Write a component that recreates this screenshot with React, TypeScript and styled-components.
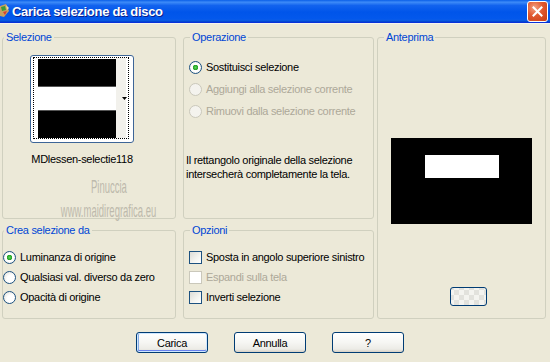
import React from 'react';
import styled, {createGlobalStyle} from "styled-components";

const GlobalStyle = createGlobalStyle`
  html, body {
    margin: 0;
    padding: 0;
    background: #ECE9D8;
  }
  body {
    font-family: "Liberation Sans", Arial, sans-serif;
    font-size: 11px;
    letter-spacing: -0.3px;
    color: #000;
  }
`;

type GroupProps = {
    title: string;
    area: string;
    legendOffset: number;
    middle?: boolean;
    children: React.ReactNode;
}

const Group = (props: GroupProps) => {
    return (
        <GroupBox $area={props.area} $middle={props.middle}>
            <GroupLegend $offset={props.legendOffset}>{props.title}</GroupLegend>
            {props.children}
        </GroupBox>
    );
};

type OptionProps = {
    label: string;
    checked?: boolean;
    disabled?: boolean;
}

const RadioOption = (props: OptionProps) => (
    <OptionLabel $disabled={props.disabled}>
        <RadioMark $disabled={props.disabled} $checked={props.checked}/>
        {props.label}
    </OptionLabel>
);

const CheckOption = (props: OptionProps) => (
    <OptionLabel $disabled={props.disabled}>
        <CheckMark $disabled={props.disabled}/>
        {props.label}
    </OptionLabel>
);

const App = () => {
    return (
        <>
            <GlobalStyle/>
            <Window>
                <TitleBar>
                    <TitleIcon width="11" height="18" viewBox="0 0 11 18">
                        <path d="M0 4 L6 2 L9 9 L4 15 L0 14 Z" fill="#c8a060"/>
                        <path d="M1 5 L5 4 L6 8 L2 9 Z" fill="#3a9a3a"/>
                        <path d="M3 10 L7 9 L5 13 Z" fill="#d84030"/>
                        <path d="M6 3 L9 6 L7 8 Z" fill="#f0e0a0"/>
                    </TitleIcon>
                    <TitleText>Carica selezione da disco</TitleText>
                    <CloseButton>
                        <svg width="11" height="11" viewBox="0 0 11 11">
                            <path d="M1.5 1.5 L9.5 9.5 M9.5 1.5 L1.5 9.5" stroke="#fff" strokeWidth="2" strokeLinecap="square"/>
                        </svg>
                    </CloseButton>
                </TitleBar>

                <Body>
                    <Group title="Selezione" area="sel" legendOffset={1}>
                        <SelectionColumn>
                            <Thumbnail>
                                <FocusFrame>
                                    <svg width="94" height="80" viewBox="0 0 94 80">
                                        <rect x="0" y="0" width="94" height="80" fill="#fff"/>
                                        <rect x="4" y="1" width="78" height="28" fill="#000"/>
                                        <rect x="4" y="28" width="78" height="1" fill="#555"/>
                                        <rect x="4" y="52" width="78" height="1" fill="#555"/>
                                        <rect x="4" y="53" width="78" height="27" fill="#000"/>
                                        <rect x="82" y="0" width="10" height="80" fill="#f2f1ec"/>
                                        <path d="M88 39 L93 39 L90.5 42 Z" fill="#000"/>
                                    </svg>
                                </FocusFrame>
                            </Thumbnail>
                            <FileName>MDlessen-selectie118</FileName>
                        </SelectionColumn>
                        <Watermark>
                            <WatermarkLine $size={19}>Pinuccia</WatermarkLine>
                            <WatermarkLine $size={19}>www.maidiregrafica.eu</WatermarkLine>
                        </Watermark>
                    </Group>

                    <Group title="Operazione" area="op" legendOffset={6} middle>
                        <OptionList $row={22} $top={12}>
                            <RadioOption label="Sostituisci selezione" checked/>
                            <RadioOption label="Aggiungi alla selezione corrente" disabled/>
                            <RadioOption label="Rimuovi dalla selezione corrente" disabled/>
                        </OptionList>
                        <Description>
                            Il rettangolo originale della selezione<br/>
                            intersecherà completamente la tela.
                        </Description>
                    </Group>

                    <Group title="Anteprima" area="prev" legendOffset={6}>
                        <PreviewColumn>
                            <svg width="141" height="86" viewBox="0 0 141 86">
                                <rect width="141" height="86" fill="#000"/>
                                <rect x="34" y="17" width="74" height="23" fill="#fff"/>
                            </svg>
                            <PatternButton/>
                        </PreviewColumn>
                    </Group>

                    <Group title="Crea selezione da" area="crea" legendOffset={1}>
                        <OptionList $row={20} $top={10} $left={0}>
                            <RadioOption label="Luminanza di origine" checked/>
                            <RadioOption label="Qualsiasi val. diverso da zero"/>
                            <RadioOption label="Opacità di origine"/>
                        </OptionList>
                    </Group>

                    <Group title="Opzioni" area="opz" legendOffset={6} middle>
                        <OptionList $row={20} $top={10}>
                            <CheckOption label="Sposta in angolo superiore sinistro"/>
                            <CheckOption label="Espandi sulla tela" disabled/>
                            <CheckOption label="Inverti selezione"/>
                        </OptionList>
                    </Group>
                </Body>

                <ButtonRow>
                    <DialogButton $default>Carica</DialogButton>
                    <DialogButton>Annulla</DialogButton>
                    <DialogButton>?</DialogButton>
                </ButtonRow>
            </Window>
        </>
    );
};

const Window = styled.div`
  width: 550px;
  height: 362px;
  background: #ECE9D8;
  overflow: hidden;
`;

const TitleBar = styled.div`
  height: 22px;
  display: flex;
  align-items: center;
  background: linear-gradient(180deg, #0A5FE8 0%, #3D8BF8 10%, #1263EE 25%, #0055EA 55%, #0358EC 85%, #0A5CE6 92%, #0040C8 100%);
  border-bottom: 1px solid #0831D9;
  box-shadow: 0 1px 0 #F5F4EE;
`;

const TitleIcon = styled.svg`
  flex: none;
  margin-right: 1px;
`;

const TitleText = styled.div`
  flex: 1;
  color: #fff;
  font-family: "Liberation Sans", Arial, sans-serif;
  font-weight: bold;
  font-size: 13px;
  letter-spacing: -0.3px;
  text-shadow: 1px 1px 0 #0A1E8C;
  padding-top: 1px;
`;

const CloseButton = styled.div`
  width: 19px;
  height: 19px;
  margin-right: 2px;
  margin-top: 1px;
  border: 1px solid #fff;
  border-radius: 3px;
  background: radial-gradient(circle at 35% 30%, #F4A182 0%, #E0582F 45%, #C83D12 100%);
  display: flex;
  align-items: center;
  justify-content: center;
`;

const Body = styled.div`
  display: grid;
  grid-template-columns: 174px 201px 169px;
  grid-template-rows: 189px 96px;
  grid-template-areas:
    "sel op prev"
    "crea opz prev";
  row-gap: 4px;
  padding: 7px 0 0 2px;
  box-sizing: border-box;
`;

const GroupBox = styled.fieldset<{ $area: string; $middle?: boolean }>`
  grid-area: ${props => props.$area};
  margin: ${props => props.$middle ? "0 3px 0 7px" : "0"};
  padding: 0;
  min-width: 0;
  border: 1px solid #D0D0BF;
  border-radius: 3px;
  display: flex;
  flex-direction: column;
`;

const GroupLegend = styled.legend<{ $offset: number }>`
  margin-left: ${props => props.$offset}px;
  padding: 0 2px;
  color: #0046D5;
  font-size: 11px;
  line-height: 14px;
`;

const SelectionColumn = styled.div`
  width: 102px;
  margin: 11px 0 0 28px;
  display: flex;
  flex-direction: column;
  align-items: center;
`;

const Thumbnail = styled.div`
  width: 100px;
  height: 84px;
  border: 1px solid #3D6597;
  border-radius: 3px;
  padding: 1px;
  box-sizing: content-box;
  background: #fff;
`;

const FocusFrame = styled.div`
  width: 94px;
  height: 80px;
  border: 1px dotted #000;
  margin: 0 1px;
  overflow: hidden;
  svg {
    display: block;
  }
`;

const FileName = styled.div`
  margin-top: 10px;
  line-height: 13px;
  white-space: nowrap;
`;

const Watermark = styled.div`
  width: 110px;
  margin: 9px 0 0 51px;
  display: flex;
  flex-direction: column;
  align-items: center;
  color: #BDB9AC;
  font-family: "Liberation Sans", Arial, sans-serif;
  letter-spacing: 0;
`;

const WatermarkLine = styled.div<{ $size: number }>`
  font-size: ${props => props.$size}px;
  line-height: 24px;
  white-space: nowrap;
  transform: scaleX(0.5);
`;

const OptionList = styled.div<{ $row: number; $top: number; $left?: number }>`
  display: grid;
  grid-auto-rows: ${props => props.$row}px;
  padding-top: ${props => props.$top}px;
  padding-left: ${props => props.$left ?? 5}px;
`;

const OptionLabel = styled.div<{ $disabled?: boolean }>`
  display: flex;
  align-items: center;
  gap: 4px;
  white-space: nowrap;
  color: ${props => props.$disabled ? "#ACA899" : "#000"};
`;

const RadioMark = styled.span<{ $disabled?: boolean; $checked?: boolean }>`
  flex: none;
  width: 11px;
  height: 11px;
  border-radius: 50%;
  border: 1px solid ${props => props.$disabled ? "#CAC8BB" : "#1C5180"};
  background: ${props => props.$disabled
          ? "#F4F3EE"
          : props.$checked
                  ? "radial-gradient(circle, #5BD35B 0, #21A121 2.5px, #FFF 3px, #FFF 4px, #E4E3DC 100%)"
                  : "radial-gradient(circle at 65% 65%, #FFF 0, #FFF 40%, #DCDBD2 100%)"};
`;

const CheckMark = styled.span<{ $disabled?: boolean }>`
  flex: none;
  width: 11px;
  height: 11px;
  border: 1px solid ${props => props.$disabled ? "#CAC8BB" : "#1C5180"};
  background: ${props => props.$disabled
          ? "#FFF"
          : "linear-gradient(135deg, #DCDCD7 0%, #F4F4F0 60%, #FFF 100%)"};
`;

const Description = styled.div`
  margin: 31px 0 0 2px;
  line-height: 14px;
`;

const PreviewColumn = styled.div`
  display: flex;
  flex-direction: column;
  align-items: center;
  padding-top: 94px;
  svg {
    display: block;
  }
`;

const PatternButton = styled.div`
  align-self: flex-start;
  margin: 63px 0 0 72px;
  width: 35px;
  height: 17px;
  border: 1px solid #003C74;
  border-radius: 3px;
  background-color: #F4F4F0;
  background-image: linear-gradient(45deg, #E2E2DD 25%, transparent 25%, transparent 75%, #E2E2DD 75%),
  linear-gradient(45deg, #E2E2DD 25%, transparent 25%, transparent 75%, #E2E2DD 75%);
  background-size: 10px 10px;
  background-position: 8px 2px, 13px 7px;
`;

const ButtonRow = styled.div`
  display: flex;
  gap: 26px;
  padding: 13px 0 0 136px;
`;

const DialogButton = styled.button<{ $default?: boolean }>`
  width: 72px;
  height: 21px;
  padding: 0;
  border: 1px solid #003C74;
  border-radius: 3px;
  background: linear-gradient(180deg, #FFFFFF 0%, #F6F6F3 50%, #ECEBE6 85%, #D6D0C5 100%);
  box-shadow: ${props => props.$default
          ? "inset 0 0 0 1px #CEE7FF, inset 0 -1px 0 1px #6982EE, inset 1px 0 0 1px #89ADE4"
          : "none"};
  font-family: "Liberation Sans", Arial, sans-serif;
  font-size: 11px;
  letter-spacing: -0.3px;
  color: #000;
  cursor: pointer;
`;

export default App;
